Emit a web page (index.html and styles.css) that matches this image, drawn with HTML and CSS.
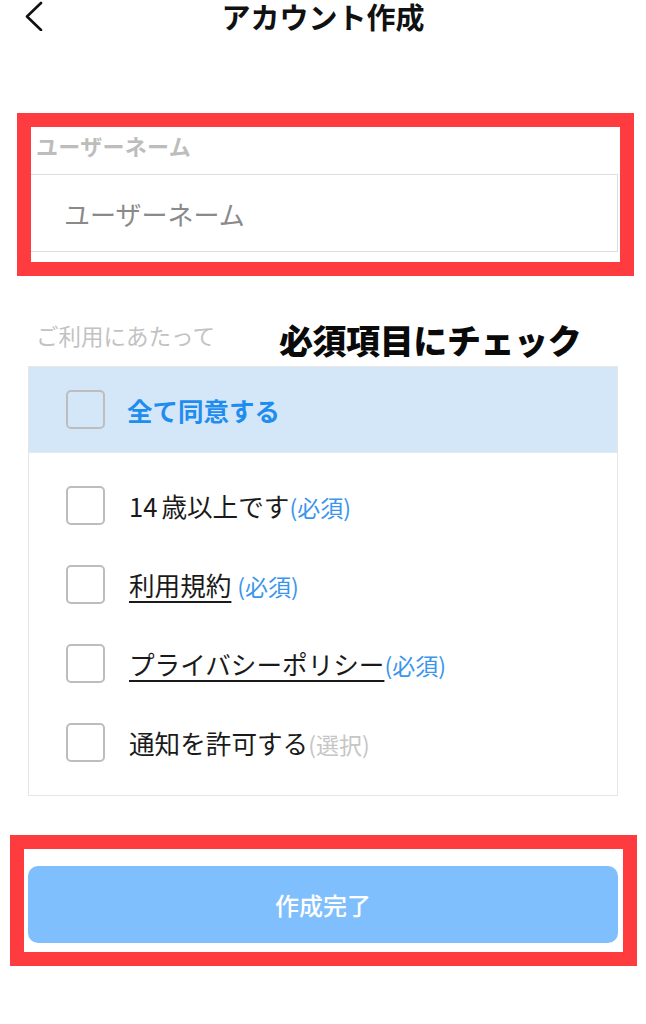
FILE: index.html
```html
<!DOCTYPE html>
<html lang="ja">
<head>
<meta charset="utf-8">
<title>アカウント作成</title>
<link rel="stylesheet" href="styles.css">
</head>
<body>
<header class="topbar">
  <div class="back-cell">
    <svg class="back" width="22" height="30" viewBox="0 0 22 30" aria-hidden="true">
      <polyline points="17,2 3,15.5 17,29" fill="none" stroke="#111" stroke-width="2.6" stroke-linecap="round" stroke-linejoin="round"/>
    </svg>
  </div>
  <h1 class="title">アカウント作成</h1>
  <div></div>
</header>

<main class="content">
  <div class="field-label">ユーザーネーム</div>
  <div class="input">ユーザーネーム</div>

  <div class="section-row">
    <span class="section-label">ご利用にあたって</span>
    <span class="note">必須項目にチェック</span>
  </div>

  <div class="card">
    <div class="row-all">
      <span class="box"></span>
      <span class="all-text">全て同意する</span>
    </div>
    <div class="list">
      <div class="row"><span class="box"></span><span class="row-text">14<span class="sp"></span>歳以上です<span class="req">(必須)</span></span></div>
      <div class="row"><span class="box"></span><span class="row-text"><span class="link">利用規約</span> <span class="req">(必須)</span></span></div>
      <div class="row"><span class="box"></span><span class="row-text"><span class="link">プライバシーポリシー</span><span class="req">(必須)</span></span></div>
      <div class="row"><span class="box"></span><span class="row-text">通知を許可する<span class="opt">(選択)</span></span></div>
    </div>
  </div>

  <button class="submit" type="button">作成完了</button>
</main>

<div class="mark mark-name"></div>
<div class="mark mark-btn"></div>
</body>
</html>
```

FILE: styles.css
```css
* { box-sizing: border-box; }

html, body {
  margin: 0;
  padding: 0;
  background: #ffffff;
}

body {
  width: 646px;
  height: 1024px;
  position: relative;
  overflow: hidden;
  font-family: "Noto Sans CJK JP", "Noto Sans", sans-serif;
  color: #1a1a1a;
}

.topbar {
  height: 32px;
  display: grid;
  grid-template-columns: 1fr auto 1fr;
  align-items: start;
}

.back-cell {
  padding-left: 24px;
  padding-top: 1px;
  display: flex;
  align-items: center;
}

.back { display: block; }

.title {
  margin: 0;
  font-size: 29px;
  line-height: 32px;
  font-weight: 700;
  color: #111;
  letter-spacing: 0;
}

.content {
  padding: 0 28px;
  display: flex;
  flex-direction: column;
}

.field-label {
  margin-top: 98px;
  padding-left: 8px;
  font-size: 22px;
  line-height: 30px;
  font-weight: 700;
  color: #bdbdbd;
  letter-spacing: 0.3px;
}

.input {
  margin-top: 14px;
  height: 78px;
  border: 1px solid #dedede;
  padding-left: 35px;
  display: flex;
  align-items: center;
  font-size: 26px;
  color: #8a8a8a;
}

.section-row {
  margin-top: 68px;
  height: 30px;
  display: flex;
  align-items: center;
  padding-left: 8px;
}

.section-label {
  font-size: 22.5px;
  line-height: 30px;
  color: #c2c2c2;
}

.note {
  margin-left: 64px;
  margin-top: 10px;
  font-size: 34px;
  line-height: 1;
  font-weight: 900;
  color: #0a0a0a;
  letter-spacing: -0.4px;
}

.card {
  margin-top: 16px;
  border: 1px solid #e6e6e6;
  display: flex;
  flex-direction: column;
}

.row-all {
  height: 86px;
  background: #d3e7f9;
  border-bottom: 1px solid #e3e9ef;
  display: flex;
  align-items: center;
  padding-left: 37px;
  gap: 22px;
}

.box {
  width: 39px;
  height: 39px;
  flex: none;
  border: 2.5px solid #bdbdbd;
  border-radius: 5px;
}

.all-text {
  font-size: 25.5px;
  font-weight: 700;
  color: #1f8cf0;
}

.list {
  padding: 13px 0 13px;
  display: flex;
  flex-direction: column;
}

.row {
  height: 79px;
  display: flex;
  align-items: center;
  padding-left: 37px;
  gap: 24px;
}

.row-text {
  font-size: 25.6px;
  color: #1a1a1a;
  white-space: nowrap;
}

.sp {
  display: inline-block;
  width: 4px;
}

.link {
  text-decoration: underline;
  text-decoration-thickness: 1.5px;
  text-underline-offset: 5px;
}

.req {
  font-size: 23px;
  color: #3a96ec;
}

.opt {
  font-size: 23px;
  color: #c6c6c6;
}

.submit {
  margin-top: 70px;
  height: 77px;
  border: none;
  border-radius: 10px;
  background: #80bffd;
  color: #ffffff;
  font-family: "Noto Sans CJK JP", "Noto Sans", sans-serif;
  font-size: 24px;
  font-weight: 500;
  padding: 0;
}

.mark {
  position: absolute;
  border: 14px solid #fe3c40;
  pointer-events: none;
}

.mark-name {
  left: 17px;
  top: 113px;
  width: 617px;
  height: 163px;
}

.mark-btn {
  left: 10px;
  top: 835px;
  width: 627px;
  height: 131px;
}
```
